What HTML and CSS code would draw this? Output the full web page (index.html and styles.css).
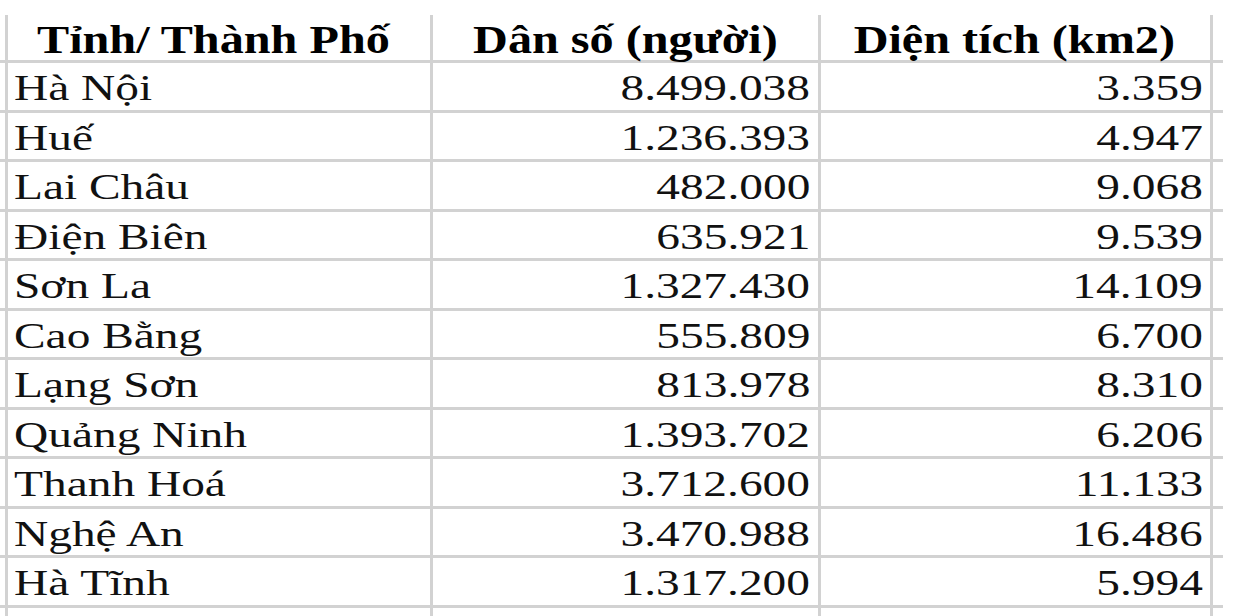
FILE: index.html
```html
<!DOCTYPE html>
<html lang="vi">
<head>
<meta charset="utf-8">
<title>Dân số và diện tích</title>
<link rel="stylesheet" href="styles.css">
</head>
<body>
<div class="sheet">
  <div class="row head">
    <div class="cell c1"><span class="t">Tỉnh/ Thành Phố</span></div>
    <div class="cell c2"><span class="t">Dân số (người)</span></div>
    <div class="cell c3"><span class="t">Diện tích (km2)</span></div>
  </div>
  <div class="row"><div class="cell c1"><span class="t">Hà Nội</span></div><div class="cell c2 num"><span class="t">8.499.038</span></div><div class="cell c3 num"><span class="t">3.359</span></div></div>
  <div class="row"><div class="cell c1"><span class="t">Huế</span></div><div class="cell c2 num"><span class="t">1.236.393</span></div><div class="cell c3 num"><span class="t">4.947</span></div></div>
  <div class="row"><div class="cell c1"><span class="t">Lai Châu</span></div><div class="cell c2 num"><span class="t">482.000</span></div><div class="cell c3 num"><span class="t">9.068</span></div></div>
  <div class="row"><div class="cell c1"><span class="t">Điện Biên</span></div><div class="cell c2 num"><span class="t">635.921</span></div><div class="cell c3 num"><span class="t">9.539</span></div></div>
  <div class="row"><div class="cell c1"><span class="t">Sơn La</span></div><div class="cell c2 num"><span class="t">1.327.430</span></div><div class="cell c3 num"><span class="t">14.109</span></div></div>
  <div class="row"><div class="cell c1"><span class="t">Cao Bằng</span></div><div class="cell c2 num"><span class="t">555.809</span></div><div class="cell c3 num"><span class="t">6.700</span></div></div>
  <div class="row"><div class="cell c1"><span class="t">Lạng Sơn</span></div><div class="cell c2 num"><span class="t">813.978</span></div><div class="cell c3 num"><span class="t">8.310</span></div></div>
  <div class="row"><div class="cell c1"><span class="t">Quảng Ninh</span></div><div class="cell c2 num"><span class="t">1.393.702</span></div><div class="cell c3 num"><span class="t">6.206</span></div></div>
  <div class="row"><div class="cell c1"><span class="t">Thanh Hoá</span></div><div class="cell c2 num"><span class="t">3.712.600</span></div><div class="cell c3 num"><span class="t">11.133</span></div></div>
  <div class="row"><div class="cell c1"><span class="t">Nghệ An</span></div><div class="cell c2 num"><span class="t">3.470.988</span></div><div class="cell c3 num"><span class="t">16.486</span></div></div>
  <div class="row"><div class="cell c1"><span class="t">Hà Tĩnh</span></div><div class="cell c2 num"><span class="t">1.317.200</span></div><div class="cell c3 num"><span class="t">5.994</span></div></div>
  <div class="row tail"><div class="cell c1"></div><div class="cell c2"></div><div class="cell c3"></div></div>
</div>
</body>
</html>
```

FILE: styles.css
```css
* { box-sizing: border-box; }
html, body { margin: 0; padding: 0; background: #ffffff; }
body {
  font-family: "Liberation Serif", "Times New Roman", serif;
  color: #111111;
  overflow: hidden;
}
.sheet {
  width: 1223px;
  padding-top: 15px;
}
.row {
  display: grid;
  grid-template-columns: 425px 388px 395px;
  padding-left: 5px;
  padding-right: 10px;
  height: 49.5px;
  border-bottom: 3px solid #d2d2d2;
}
.cell {
  border-left: 3px solid #d2d2d2;
  overflow: visible;
  white-space: nowrap;
  font-size: 35.5px;
  line-height: 41px;
  padding: 5px 0 0 6px;
}
.cell.c3 { border-right: 3px solid #d2d2d2; }
.cell.num {
  text-align: right;
  padding-right: 8px;
  padding-left: 0;
}
.cell.c3.num { padding-right: 7px; }
.t {
  display: inline-block;
  transform: scaleX(1.335);
  transform-origin: left center;
}
.num .t { transform-origin: right center; }
.head { height: 48px; }
.head .cell {
  font-weight: bold;
  font-size: 40px;
  line-height: 44px;
  padding: 3px 0 0 0;
  text-align: center;
  color: #000;
}
.head .cell.c1 { padding-right: 12px; }
.head .cell.c3 { padding-right: 2px; }
.head .t {
  transform: scaleX(1.205);
  transform-origin: center center;
}
.tail {
  height: 12px;
  border-bottom: none;
}
```
